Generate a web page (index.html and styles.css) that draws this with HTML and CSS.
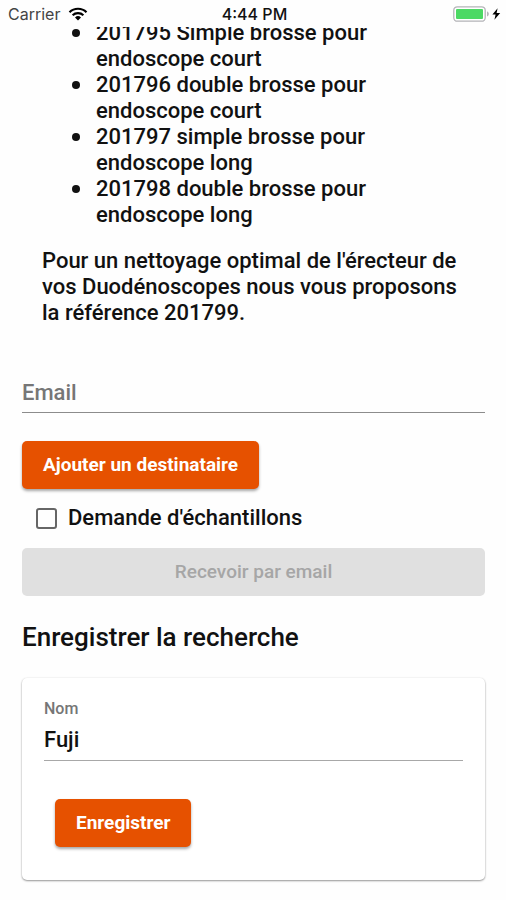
FILE: index.html
```html
<!DOCTYPE html>
<html lang="fr">
<head>
    <meta charset="utf-8">
    <meta name="viewport" content="width=device-width, initial-scale=1">
    <title>Enregistrer la recherche</title>
    <link rel="stylesheet" href="styles.css">
</head>
<body>
    <header class="status-bar">
        <div class="status-left">
            <span class="carrier">Carrier</span>
            <svg class="wifi" viewBox="0 0 20 14" width="20" height="14" aria-hidden="true">
                <path d="M1.5 5.2a12.2 12.2 0 0 1 17 0" fill="none" stroke="#000" stroke-width="2.2"/>
                <path d="M4.6 8.3a7.8 7.8 0 0 1 10.8 0" fill="none" stroke="#000" stroke-width="2.1"/>
                <path d="M10 13.4 7 10.4a4.3 4.3 0 0 1 6 0z" fill="#000"/>
            </svg>
        </div>
        <span class="clock">4:44 PM</span>
        <div class="status-right">
            <svg class="battery" viewBox="0 0 48 16" width="48" height="16" aria-hidden="true">
                <rect x="0.8" y="0.8" width="31.4" height="14.4" rx="3.5" fill="#fff" stroke="#b4b4b8" stroke-width="1.3"/>
                <rect x="3" y="3" width="27" height="10" rx="1" fill="#4cd964"/>
                <path d="M34 5.6c2.4 0.6 2.4 4.2 0 4.8z" fill="#b4b4b8"/>
                <path d="M44.6 2.2 39.4 8.6h3.2l-1.2 5.2 5.8-6.8h-3.6z" fill="#000"/>
            </svg>
        </div>
    </header>

    <main class="content">
        <div class="description">
            <ul>
                <li>201795 Simple brosse pour endoscope court</li>
                <li>201796 double brosse pour endoscope court</li>
                <li>201797 simple brosse pour endoscope long</li>
                <li>201798 double brosse pour endoscope long</li>
            </ul>
            <p>Pour un nettoyage optimal de l'érecteur de vos Duodénoscopes nous vous proposons la référence 201799.</p>
        </div>

        <form class="email-form">
            <input class="field" type="email" placeholder="Email" aria-label="Email">
            <button class="btn" type="button">Ajouter un destinataire</button>
            <div class="check-row">
                <input type="checkbox" id="samples">
                <label for="samples">Demande d'échantillons</label>
            </div>
            <button class="btn btn-block" type="submit" disabled>Recevoir par email</button>
        </form>

        <h2>Enregistrer la recherche</h2>
        <form class="card">
            <label class="field-label" for="name">Nom</label>
            <input class="field" type="text" id="name" value="Fuji">
            <button class="btn btn-save" type="button">Enregistrer</button>
        </form>
    </main>
</body>
</html>
```

FILE: styles.css
```css
* {
    box-sizing: border-box;
}

body {
    margin: 0;
    background-color: #fefefe;
    color: #111;
    font-family: Roboto, sans-serif;
    font-size: 22px;
    font-weight: 500;
    line-height: 26px;
}

/* stays above the scrolled content */
.status-bar {
    position: sticky;
    top: 0;
    z-index: 1;
    display: grid;
    grid-template-columns: 1fr auto 1fr;
    align-items: center;
    height: 27px;
    padding: 1px 5px 0 8px;
    background-color: #fefefe;
    font-family: Inter, sans-serif;
    font-size: 16px;
    line-height: 16px;
}

.status-left {
    display: flex;
    align-items: center;
    gap: 8px;
}

.carrier {
    font-weight: 400;
    color: #444;
}

.status-right {
    display: flex;
    justify-content: flex-end;
}

.content {
    margin-top: -7px;
    padding: 0 21px 20px 22px;
}

.description {
    padding: 0 20px;
}

.description ul {
    margin: 0 0 20px;
    padding: 0 40px 0 30px;
    list-style: none;
}

.description li {
    display: flex;
    gap: 16px;
}

.description li::before {
    content: "";
    flex: none;
    width: 8px;
    height: 8px;
    margin-top: 9px;
    border-radius: 50%;
    background-color: #111;
}

.description p {
    margin: 0;
}

.email-form {
    display: flex;
    flex-direction: column;
    align-items: flex-start;
    margin-top: 51px;
}

.field {
    display: block;
    width: 100%;
    height: 36px;
    padding: 0 0 5px;
    border: none;
    border-bottom: 1px solid #8c8c8c;
    border-radius: 0;
    background: none;
    color: #111;
    font: inherit;
    outline: none;
}

.field::placeholder {
    color: #767676;
    opacity: 1;
}

.btn {
    height: 48px;
    padding: 0 21px 2px;
    border: none;
    border-radius: 5px;
    background-color: #e65100;
    color: #fff;
    font-family: inherit;
    font-size: 19px;
    font-weight: 700;
    cursor: pointer;
    box-shadow: 0 2px 3px rgba(0, 0, 0, 0.35);
}

.email-form .btn {
    margin-top: 28px;
}

.check-row {
    display: flex;
    align-items: center;
    gap: 11px;
    margin: 16px 0 0 14px;
}

.check-row input {
    appearance: none;
    width: 21px;
    height: 21px;
    margin: 0;
    border: 2px solid #666;
    border-radius: 3px;
}

.email-form .btn-block {
    width: 100%;
    margin-top: 17px;
    background-color: #e0e0e0;
    color: #a6a6a6;
    box-shadow: none;
    font-weight: 500;
    cursor: default;
}

h2 {
    margin: 26px 0;
    font-size: 26px;
    font-weight: 500;
    line-height: 30px;
}

.card {
    padding: 21px 22px 33px;
    border-radius: 5px;
    background-color: #fff;
    box-shadow: 0 1px 2px rgba(0, 0, 0, 0.4), 0 0 2px rgba(0, 0, 0, 0.08);
}

.field-label {
    display: block;
    color: #767676;
    font-size: 16px;
    line-height: 20px;
}

.card .field {
    height: 42px;
    padding-bottom: 1px;
    border-color: #a8a8a8;
}

.btn-save {
    margin: 38px 0 0 11px;
}
```
